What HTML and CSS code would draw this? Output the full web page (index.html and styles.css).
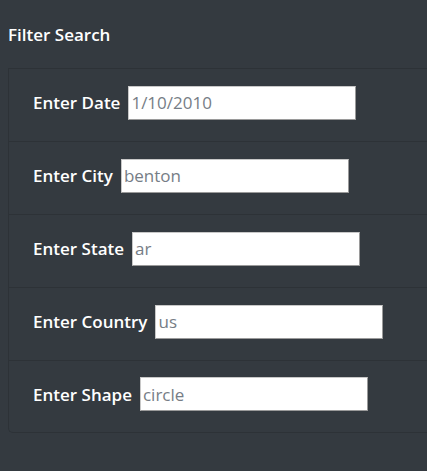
FILE: index.html
```html
<!DOCTYPE html>
<html>
<head>
<meta charset="utf-8">
<link rel="stylesheet" href="styles.css">
</head>
<body>
<div class="panel">
  <div class="panel-title">Filter Search</div>
  <ul class="filters">
    <li class="filter"><label for="date">Enter Date</label><input id="date" class="field" type="text" value="1/10/2010"></li>
    <li class="filter"><label for="city">Enter City</label><input id="city" class="field" type="text" value="benton"></li>
    <li class="filter"><label for="state">Enter State</label><input id="state" class="field" type="text" value="ar"></li>
    <li class="filter"><label for="country">Enter Country</label><input id="country" class="field" type="text" value="us"></li>
    <li class="filter"><label for="shape">Enter Shape</label><input id="shape" class="field" type="text" value="circle"></li>
  </ul>
</div>
</body>
</html>
```
FILE: styles.css
```css
html, body {
  margin: 0;
  padding: 0;
  background: #343a40;
}
body {
  font-family: "Open Sans", "Noto Sans", sans-serif;
  color: #fff;
}
.panel {
  width: 427px;
  height: 471px;
  background: #343a40;
  overflow: hidden;
}
.panel-title {
  height: 68px;
  box-sizing: border-box;
  padding: 24px 0 0 8px;
  font-size: 17px;
  font-weight: 600;
  line-height: 22px;
}
.filters {
  list-style: none;
  margin: 0 0 0 8px;
  padding: 0;
  border: 1px solid #2d3237;
  border-right: none;
  border-radius: 0 0 0 5px;
}
.filter {
  display: flex;
  align-items: center;
  gap: 8px;
  height: 73px;
  box-sizing: border-box;
  padding: 0 0 5px 24px;
  border-bottom: 1px solid #2d3237;
}
.filter:last-child {
  border-bottom: none;
  height: 71px;
}
.filter label {
  font-size: 17px;
  font-weight: 600;
}
.field {
  width: 228px;
  height: 34px;
  box-sizing: border-box;
  margin: 0;
  padding: 2px 2px;
  border: 1px solid #9a9a9a;
  border-top-color: #c8c8c8;
  border-left-color: #c8c8c8;
  background: #fff;
  font-family: "Open Sans", "Noto Sans", sans-serif;
  font-size: 17px;
  color: #767d86;
  outline: none;
}
```
